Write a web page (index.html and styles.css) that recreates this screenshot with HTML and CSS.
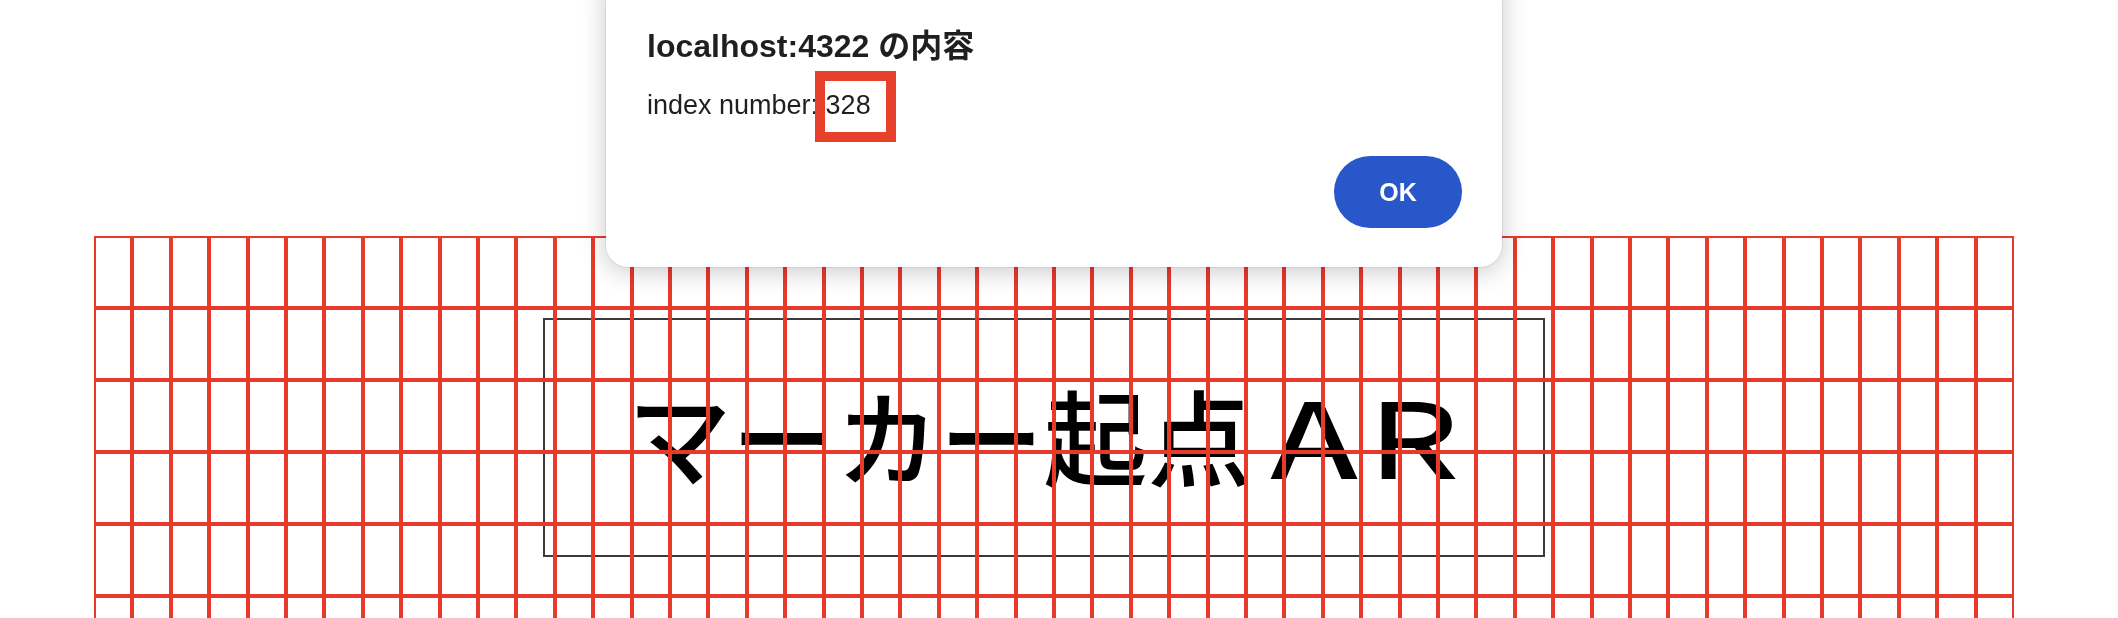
FILE: index.html
```html
<!DOCTYPE html>
<html lang="ja">
<head>
<meta charset="utf-8">
<title>マーカー起点AR</title>
<link rel="stylesheet" href="styles.css">
</head>
<body>
<main class="stage">
  <section class="content">
    <div class="title-box">
      <h1 class="title-text">マーカー起点<span class="ar">ＡＲ</span></h1>
    </div>
  </section>
  <div class="grid" id="grid"></div>
</main>

<div class="dialog" role="alertdialog">
  <h2 class="dialog-title">localhost:4322 の内容</h2>
  <p class="dialog-body">index number: 328</p>
  <div class="dialog-actions">
    <button class="ok-btn" type="button">OK</button>
  </div>
  <div class="mark"></div>
</div>

<script>
  var g = document.getElementById('grid');
  var html = '';
  for (var i = 0; i < 50 * 6; i++) html += '<div class="cell"></div>';
  g.innerHTML = html;
</script>
</body>
</html>
```

FILE: styles.css
```css
html, body {
  margin: 0;
  padding: 0;
  background: #ffffff;
  overflow: hidden;
}

body {
  width: 2118px;
  height: 618px;
  font-family: "Liberation Sans", "Noto Sans CJK JP", sans-serif;
}

.stage {
  position: relative;
  margin: 236px 0 0 94px;
  width: 1920px;
  height: 432px;
}

.content {
  padding: 82px 0 0 449px;
}

.title-box {
  box-sizing: border-box;
  width: 1002px;
  height: 239px;
  padding-bottom: 8px;
  border: 2px solid #3a3a3a;
  display: flex;
  align-items: center;
  justify-content: center;
}

.title-text {
  margin: 0;
  font-family: "Noto Sans CJK JP", sans-serif;
  font-weight: 500;
  font-size: 104px;
  line-height: 1;
  color: #000;
  white-space: nowrap;
}

.ar {
  display: inline-block;
  transform: scaleX(1.2);
  transform-origin: left center;
  letter-spacing: -21px;
  margin-right: 43px;
}

.grid {
  position: absolute;
  left: 0;
  top: 0;
  width: 1920px;
  display: grid;
  grid-template-columns: repeat(50, 1fr);
  grid-auto-rows: 72px;
  pointer-events: none;
}

.cell {
  box-sizing: border-box;
  border: 2px solid #e83a2b;
}

.dialog {
  position: fixed;
  left: 606px;
  top: -30px;
  width: 896px;
  box-sizing: border-box;
  padding: 56px 40px 39px 41px;
  background: #ffffff;
  border-radius: 22px;
  box-shadow: 0 0 0 1px rgba(0, 0, 0, 0.06), 0 4px 26px rgba(0, 0, 0, 0.22);
  color: #1f1f1f;
}

.dialog-title {
  margin: 0;
  font-family: "Liberation Sans", "Noto Sans CJK JP", sans-serif;
  font-weight: 700;
  font-size: 32px;
  line-height: 40px;
  white-space: nowrap;
}

.dialog-body {
  margin: 21px 0 0 0;
  font-size: 27px;
  line-height: 36px;
  white-space: nowrap;
}

.dialog-actions {
  display: flex;
  justify-content: flex-end;
  margin-top: 33px;
}

.ok-btn {
  width: 128px;
  height: 72px;
  border: none;
  border-radius: 36px;
  background: #2757c9;
  color: #ffffff;
  font-family: "Liberation Sans", sans-serif;
  font-weight: 700;
  font-size: 25px;
  padding: 0;
}

.mark {
  position: absolute;
  left: 209px;
  top: 101px;
  width: 81px;
  height: 71px;
  box-sizing: border-box;
  border: 10px solid #e8412b;
}
```
